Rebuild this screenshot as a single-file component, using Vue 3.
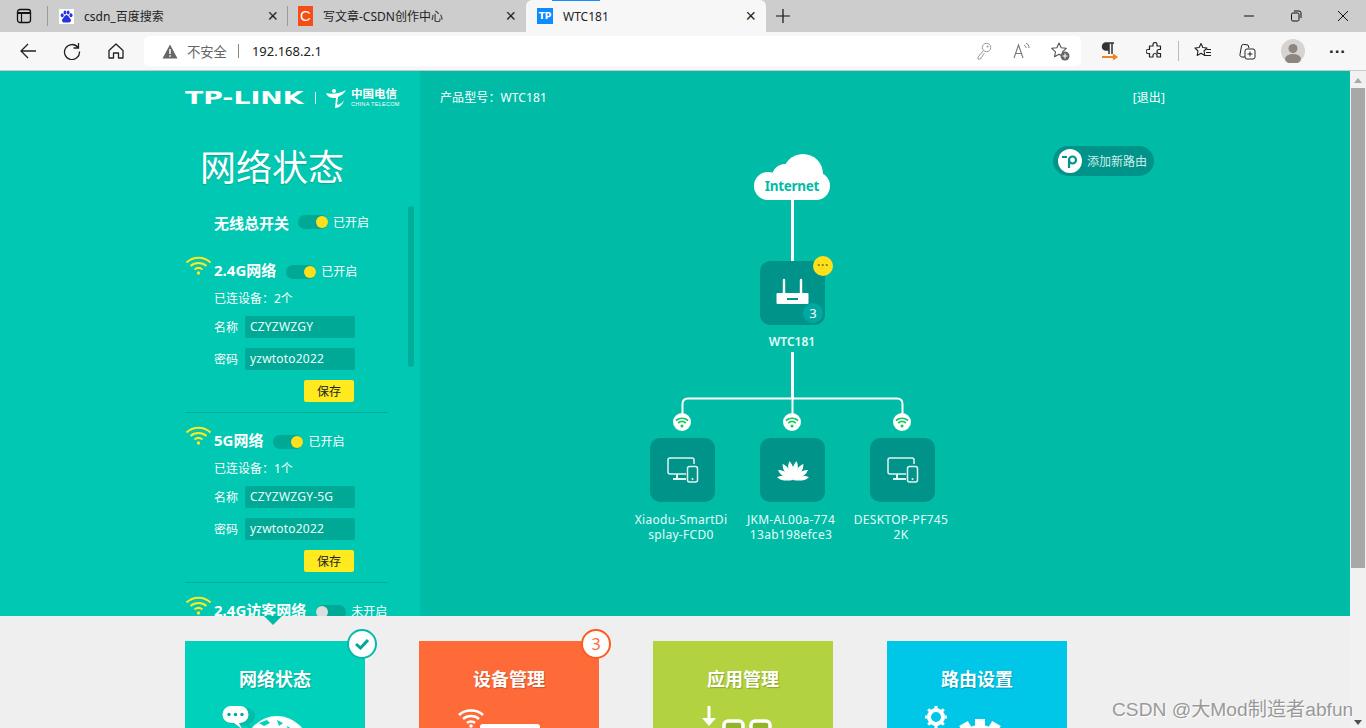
<script setup>
const nets = [
  { id: 1, title: '2.4G网络', on: true, open: true, info: '已连设备：2个', ssid: 'CZYZWZGY', pwd: 'yzwtoto2022' },
  { id: 2, title: '5G网络', on: true, open: true, info: '已连设备：1个', ssid: 'CZYZWZGY-5G', pwd: 'yzwtoto2022' },
  { id: 3, title: '2.4G访客网络', on: false, open: false }
]

const devices = [
  { id: 1, x: 682, l1: 'Xiaodu-SmartDi', l2: 'splay-FCD0', icon: 'screen' },
  { id: 2, x: 792, l1: 'JKM-AL00a-774', l2: '13ab198efce3', icon: 'huawei' },
  { id: 3, x: 902, l1: 'DESKTOP-PF745', l2: '2K', icon: 'screen' }
]

const cards = [
  { id: 1, name: '网络状态', cls: 'green' },
  { id: 2, name: '设备管理', cls: 'orange' },
  { id: 3, name: '应用管理', cls: 'lime' },
  { id: 4, name: '路由设置', cls: 'blue' }
]

const petals = [
  { a: -80, s: 0.85 },
  { a: -56, s: 0.95 },
  { a: -33, s: 1 },
  { a: -11, s: 1 },
  { a: 11, s: 1 },
  { a: 33, s: 1 },
  { a: 56, s: 0.95 },
  { a: 80, s: 0.85 }
]
const teeth = [0, 45, 90, 135, 180, 225, 270, 315]
const bigTeeth = [-60, -30, 0, 30, 60]

const petalTransform = (p) => `rotate(${p.a} 17 21) translate(17 21) scale(${p.s}) translate(-17 -21)`
</script>

<template>
  <div class="browser">
    <div class="tabbar">
      <svg class="tabside" width="16" height="16" viewBox="0 0 16 16">
        <rect x="1.5" y="1.5" width="13" height="13" rx="2.5" fill="none" stroke="#111" stroke-width="1.3" />
        <path d="M2 5h12" stroke="#111" stroke-width="2" />
        <path d="M5.5 5v9" stroke="#111" stroke-width="1.2" />
      </svg>
      <div class="tab tab-one">
        <svg class="fav" width="15" height="15" viewBox="0 0 15 15">
          <rect width="15" height="15" fill="#fff" />
          <ellipse cx="3.2" cy="6.2" rx="1.5" ry="2" fill="#2932e1" />
          <ellipse cx="6" cy="3.4" rx="1.4" ry="2" fill="#2932e1" />
          <ellipse cx="9.2" cy="3.4" rx="1.4" ry="2" fill="#2932e1" />
          <ellipse cx="12" cy="6.2" rx="1.5" ry="2" fill="#2932e1" />
          <path d="M7.5 6C5.5 6 5 8.5 3.5 10c-1.2 1.5 0 3.8 2 3.6 1.2-.2 2.6-.2 4 0 2 .2 3.2-2 2-3.6C10 8.500 9.500 6 7.500 6z" fill="#2932e1" />
        </svg>
        <span class="tabtext">csdn_百度搜索</span>
        <span class="tabx">×</span>
      </div>
      <div class="tab tab-two">
        <span class="fav-c">C</span>
        <span class="tabtext">写文章-CSDN创作中心</span>
        <span class="tabx">×</span>
      </div>
      <div class="tab tab-active">
        <span class="fav-tp">TP</span>
        <span class="tabtext">WTC181</span>
        <span class="tabx">×</span>
      </div>
      <svg class="plus" width="14" height="14" viewBox="0 0 14 14"><path d="M7 0v14M0 7h14" stroke="#111" stroke-width="1.2" /></svg>
      <div class="winctl">
        <svg width="12" height="12" viewBox="0 0 12 12"><path d="M1 6h10" stroke="#111" stroke-width="1" /></svg>
        <svg width="12" height="12" viewBox="0 0 12 12"><rect x="1.500" y="3" width="7.500" height="8" rx="1.500" fill="none" stroke="#111" /><path d="M4 1h5a2 2 0 0 1 2 2v5" fill="none" stroke="#111" /></svg>
        <svg width="12" height="12" viewBox="0 0 12 12"><path d="M1 1l10 10M11 1L1 11" stroke="#111" stroke-width="1" /></svg>
      </div>
    </div>

    <div class="toolbar">
      <svg class="tool first" width="18" height="18" viewBox="0 0 18 18"><path d="M17 9H2M9 2L2 9l7 7" fill="none" stroke="#222" stroke-width="1.300" /></svg>
      <svg class="tool" width="18" height="18" viewBox="0 0 18 18"><path d="M15 5.500A7.500 7.500 0 1 0 16.500 9.500M15.500 1v5h-5" fill="none" stroke="#222" stroke-width="1.300" /></svg>
      <svg class="tool" width="18" height="18" viewBox="0 0 18 18"><path d="M2 8.500L9 2l7 6.500V16h-4.500v-5h-5v5H2z" fill="none" stroke="#222" stroke-width="1.300" stroke-linejoin="round" /></svg>
      <div class="address">
        <svg width="16" height="15" viewBox="0 0 16 15"><path d="M8 0.500L15.500 14.500H0.500z" fill="#666" /><path d="M8 5v5M8 11.200v1.600" stroke="#fff" stroke-width="1.500" /></svg>
        <span class="unsafe">不安全</span>
        <i class="addr-sep"></i>
        <span class="url">192.168.2.1</span>
        <div class="addr-right">
          <svg width="16" height="18" viewBox="0 0 16 18"><circle cx="10.500" cy="5.500" r="4.200" fill="none" stroke="#999" /><path d="M7.500 8.500L2 15v2h2.500l1-2 1-.5.500-2 1.500-1" fill="none" stroke="#999" /><circle cx="11.500" cy="4.500" r="1" fill="#999" /></svg>
          <svg width="18" height="18" viewBox="0 0 18 18"><path d="M2 16L6.500 3 11 16M3.500 11.500h6" fill="none" stroke="#777" stroke-width="1.100" /><path d="M12 3c1.500.8 2 2 2 3M14 1c2 1 3 3 3 5" fill="none" stroke="#777" /></svg>
          <svg width="20" height="20" viewBox="0 0 20 20"><path d="M9 2l2.200 4.700 5.100.6-3.800 3.500 1 5-4.500-2.600-4.500 2.600 1-5L1.700 7.300l5.100-.6z" fill="#fff" stroke="#555" stroke-width="1.100" stroke-linejoin="round" /><circle cx="15" cy="15" r="4.500" fill="#666" /><path d="M15 12.500v5M12.500 15h5" stroke="#fff" stroke-width="1.100" /></svg>
        </div>
      </div>
      <svg class="ext" width="18" height="20" viewBox="0 0 18 20"><path d="M8 2H5a3.500 3.500 0 0 0 0 7h3zM8 2h5M8 2v11M11 2v11" fill="#333" stroke="#333" stroke-width="1.500" /><path d="M1 16h14M12 13.500l3.500 2.500-3.500 2.500" fill="none" stroke="#f58220" stroke-width="1.800" /></svg>
      <svg class="ext puzzle" width="18" height="18" viewBox="0 0 18 18"><path d="M7 2.500a2 2 0 0 1 4 0V4h3.500v3.500H13a2 2 0 0 0 0 4h1.500V15H11v-1.500a2 2 0 0 0-4 0V15H3.500v-3.500H2a2 2 0 0 1 0-4h1.500V4H7z" fill="none" stroke="#222" stroke-width="1.200" stroke-linejoin="round" /></svg>
      <i class="tool-sep"></i>
      <svg class="ext fav-list" width="18" height="18" viewBox="0 0 18 18"><path d="M7 1.500l1.800 4 4.200.5-3 3 .8 4.500L7 11.300 3.200 13.500 4 9 1 6l4.200-.5z" fill="none" stroke="#222" stroke-width="1.100" stroke-linejoin="round" /><path d="M12.500 7.500H17M12 10.500h5M11 13.500h6" stroke="#222" /></svg>
      <svg class="ext coll" width="18" height="18" viewBox="0 0 18 18"><path d="M7 15H4a2 2 0 0 1-2-2.500L3.500 4a2 2 0 0 1 2.200-1.600L10 3l1 3" fill="none" stroke="#222" /><rect x="7" y="7" width="10" height="10" rx="2" fill="#fff" stroke="#222" /><path d="M12 9.500v5M9.500 12h5" stroke="#222" /></svg>
      <svg class="ext avatar" width="24" height="24" viewBox="0 0 24 24"><circle cx="12" cy="12" r="12" fill="#d6d3d0" /><circle cx="12" cy="9.500" r="4.500" fill="#8b8682" /><ellipse cx="12" cy="20" rx="8" ry="5" fill="#8b8682" /></svg>
      <span class="more">···</span>
    </div>

    <div class="page">
      <div class="content">
        <div class="top">
          <aside class="side">
            <div class="logos">
              <span class="tplink">TP-LINK</span>
              <i class="logo-sep"></i>
              <svg width="22" height="20" viewBox="0 0 22 20"><path d="M1 5c5 2 15 0 20-3-2 4-6 6-8 7l-1 8c4-1 6-3 7-5-1 4-4 8-9 8l1-10C7 10 3 10 1 5z" fill="#fff" /><circle cx="9" cy="3" r="2" fill="#fff" /></svg>
              <div class="ct">
                <span class="ct-cn">中国电信</span>
                <span class="ct-en">CHINA TELECOM</span>
              </div>
            </div>
            <h1 class="title">网络状态</h1>
            <div class="master">
              <b>无线总开关</b>
              <span class="toggle on"><i></i></span>
              <span class="state">已开启</span>
            </div>
            <i class="side-scroll"></i>
            <section v-for="n in nets" :key="n.id" class="net" :class="{ first: n.id === 1 }">
              <div class="net-head">
                <svg width="27" height="20" viewBox="0 0 27 20" class="wifi">
                  <path d="M1.500 7.500C8 1 19 1 25.500 7.500M5.500 11c4.500-4 11.500-4 16 0M9.500 14.500c2.500-2 5.500-2 8 0" fill="none" stroke="#ffe91f" stroke-width="2" />
                  <circle cx="13.500" cy="18" r="1.700" fill="#ffe91f" />
                </svg>
                <b class="net-name">{{ n.title }}</b>
                <span class="toggle" :class="n.on ? 'on' : 'off'"><i></i></span>
                <span class="state">{{ n.on ? '已开启' : '未开启' }}</span>
              </div>
              <template v-if="n.open">
                <div class="net-info">{{ n.info }}</div>
                <div class="field"><label>名称</label><span class="input">{{ n.ssid }}</span></div>
                <div class="field"><label>密码</label><span class="input">{{ n.pwd }}</span></div>
                <div class="save-row"><button class="save">保存</button></div>
              </template>
            </section>
          </aside>

          <main class="main">
            <div class="main-head">
              <span>产品型号：WTC181</span>
              <a>[退出]</a>
            </div>
            <div class="add-route">
              <span class="add-dot">
                <svg width="18" height="14" viewBox="0 0 18 14"><path d="M1 3h5" stroke="#00938a" stroke-width="2" /><circle cx="11.500" cy="6" r="3.500" fill="none" stroke="#00938a" stroke-width="2.200" /><path d="M8 6v8" stroke="#00938a" stroke-width="2.200" /></svg>
              </span>
              <span>添加新路由</span>
            </div>

            <!-- topology canvas, coordinates are page x minus 420 and page y minus 71 -->
            <svg class="links" width="930" height="545" viewBox="420 71 930 545">
              <path d="M792.500 198V262M792.500 352V398" stroke="#fff" stroke-width="3" fill="none" />
              <path d="M682.500 414V404q0-5.500 5.500-5.500H897q5.500 0 5.500 5.500V414M792.500 398V414" stroke="#fff" stroke-width="2" fill="none" />
              <g fill="#fff">
                <circle cx="768" cy="186" r="14" />
                <circle cx="785" cy="177" r="13" />
                <circle cx="803" cy="174" r="20" />
                <circle cx="816" cy="186" r="14" />
                <rect x="768" y="180" width="48" height="20" />
              </g>
            </svg>
            <span class="internet">Internet</span>

            <div class="tile router">
              <svg width="34" height="30" viewBox="0 0 34 30">
                <path d="M8 16V2M25 16V2" stroke="#fff" stroke-width="2.400" stroke-linecap="round" />
                <rect x="0.500" y="15" width="32" height="11" rx="1" fill="#fff" />
                <rect x="11" y="20" width="11" height="2" fill="#00938a" />
              </svg>
              <span class="more-badge">···</span>
              <span class="count">3</span>
            </div>
            <span class="router-name">WTC181</span>

            <template v-for="d in devices" :key="d.id">
              <span class="link-dot" :style="{ left: d.x - 429 + 'px' }">
                <svg width="14" height="11" viewBox="0 0 14 11"><path d="M1 3.500c3.500-3 8.500-3 12 0M3.200 6c2.300-2 5.300-2 7.600 0" fill="none" stroke="#12c95d" stroke-width="1.700" /><circle cx="7" cy="9" r="1.500" fill="#12c95d" /></svg>
              </span>
              <div class="tile device" :style="{ left: d.x - 452 + 'px' }">
                <svg v-if="d.icon === 'screen'" width="32" height="26" viewBox="0 0 32 26">
                  <path d="M19 17H3a2 2 0 0 1-2-2V3a2 2 0 0 1 2-2h22a2 2 0 0 1 2 2v4" fill="none" stroke="#dff5f2" stroke-width="1.500" />
                  <path d="M10 17v5M6 22h13" stroke="#dff5f2" stroke-width="2" />
                  <rect x="20.500" y="9.500" width="10" height="15.500" rx="2" fill="none" stroke="#dff5f2" stroke-width="1.500" />
                  <circle cx="25.500" cy="22" r="1" fill="#dff5f2" />
                </svg>
                <svg v-else width="34" height="23" viewBox="0 0 34 23">
                  <path v-for="p in petals" :key="p.a" d="M17 21C15.500 17 14.300 12 14.600 8 15 5.500 16 3.500 17 2 18 3.500 19 5.500 19.400 8 19.700 12 18.500 17 17 21z" fill="#fff" :transform="petalTransform(p)" />
                </svg>
              </div>
              <div class="device-name" :style="{ left: d.x - 481 + 'px' }">{{ d.l1 }}<br />{{ d.l2 }}</div>
            </template>
          </main>
        </div>

        <div class="bottom">
          <i class="caret"></i>
          <div v-for="c in cards" :key="c.id" class="card" :class="c.cls">
            <span v-if="c.id === 1" class="badge check">
              <svg width="16" height="12" viewBox="0 0 16 12"><path d="M2 6l4.500 4L14 2" fill="none" stroke="#00a896" stroke-width="3" /></svg>
            </span>
            <span v-if="c.id === 2" class="badge num">3</span>
            <h3>{{ c.name }}</h3>
            <svg class="card-art" width="180" height="32" viewBox="0 0 180 32">
              <g v-if="c.id === 1">
                <path d="M48 2h13a8 8 0 0 1 2 16l4 5-6-3-13-2a8 8 0 0 1 0-16z" fill="#00a896" opacity="0.500" />
                <path d="M46 0h9a8.500 8.500 0 0 1 0 17h-1l3 6-8-6h-3a8.500 8.500 0 0 1 0-17z" fill="#fff" />
                <circle cx="44" cy="8.500" r="1.700" fill="#00a896" /><circle cx="50.500" cy="8.500" r="1.700" fill="#00a896" /><circle cx="57" cy="8.500" r="1.700" fill="#00a896" />
                <circle cx="92" cy="42" r="32" fill="#fff" />
                <path d="M74 17l8-3 3 3-6 3zM92 14l6 3-4 3zM102 20l5 3-4 2z" fill="#00d1bb" />
              </g>
              <g v-if="c.id === 2">
                <path d="M40 9c6-6 18-6 24 0M44 13c4-4 12-4 16 0M48 17c2-2 6-2 8 0" fill="none" stroke="#fff" stroke-width="2.500" />
                <circle cx="52" cy="20" r="1.800" fill="#fff" />
                <rect x="61" y="18" width="60" height="40" rx="3" fill="#fff" />
              </g>
              <g v-if="c.id === 3">
                <path d="M56 0V14" stroke="#fff" stroke-width="3" /><path d="M49 12h14l-7 8z" fill="#fff" />
                <rect x="71" y="15" width="19" height="24" rx="4" fill="#8fb62b" stroke="#fff" stroke-width="3.500" />
                <rect x="98" y="15" width="19" height="24" rx="4" fill="#8fb62b" stroke="#fff" stroke-width="3.500" />
              </g>
              <g v-if="c.id === 4">
                <circle cx="49" cy="11" r="7" fill="none" stroke="#fff" stroke-width="4" />
                <path v-for="t in teeth" :key="t" d="M47.500 0h3v3.500h-3z" fill="#fff" :transform="'rotate(' + t + ' 49 11)'" />
                <circle cx="93" cy="46" r="27" fill="#fff" />
                <path v-for="t in bigTeeth" :key="'b' + t" d="M88 13h10v10H88z" fill="#fff" :transform="'rotate(' + t + ' 93 46)'" />
              </g>
            </svg>
          </div>
          <span class="watermark">CSDN @大Mod制造者abfun</span>
        </div>
      </div>

      <div class="scrollbar">
        <i class="arrow up"></i>
        <i class="thumb"></i>
        <i class="arrow down"></i>
      </div>
    </div>
  </div>
</template>

<style scoped>
.browser {
  width: 1366px;
  height: 728px;
  overflow: hidden;
  display: flex;
  flex-direction: column;
  font-family: "Noto Sans", "Noto Sans CJK SC", sans-serif;
  color: #fff;
}

/* tabs */
.tabbar {
  height: 32px;
  background: #cdcdcd;
  display: flex;
  align-items: center;
  color: #222;
  font-size: 12px;
  flex: none;
}
.tabside {
  margin-left: 16px;
}
.tab {
  height: 32px;
  display: flex;
  align-items: center;
  position: relative;
  flex: none;
}
.tab-one {
  margin-left: 15px;
  width: 240px;
  padding-left: 11px;
  border-left: 1px solid #9a9a9a;
  height: 20px;
  box-sizing: border-box;
}
.tab-two {
  width: 239px;
  padding-left: 10px;
  border-left: 1px solid #9a9a9a;
  height: 20px;
  box-sizing: border-box;
}
.tab-active {
  width: 240px;
  padding-left: 11px;
  box-sizing: border-box;
  background: #f7f7f7;
  border-radius: 6px 6px 0 0;
}
.tab-active::before {
  content: "";
  position: absolute;
  top: 0;
  left: 26px;
  width: 48px;
  height: 1px;
  background: #1a8cff;
}
.fav {
  flex: none;
}
.fav-c {
  width: 15px;
  height: 20px;
  flex: none;
  background: #f64c15;
  color: #fff;
  font: 400 15px/20px "Liberation Sans", sans-serif;
  text-align: center;
}
.fav-tp {
  width: 16px;
  height: 16px;
  flex: none;
  background: #0d8bff;
  color: #fff;
  font: 700 9px/16px "DejaVu Sans", sans-serif;
  text-align: center;
}
.tabtext {
  margin-left: 10px;
}
.tabx {
  position: absolute;
  right: 10px;
  top: 50%;
  transform: translateY(-50%);
  font: 400 18px/18px "Liberation Sans", sans-serif;
  color: #222;
}
.tab-one .tabx {
  right: 9px;
}
.plus {
  margin-left: 10px;
}
.winctl {
  margin-left: auto;
  display: flex;
  gap: 35px;
  padding-right: 17px;
}

/* toolbar */
.toolbar {
  height: 39px;
  box-sizing: border-box;
  background: #f7f7f7;
  border-bottom: 1px solid #c9c9c9;
  display: flex;
  align-items: center;
  flex: none;
}
.tool {
  margin-left: 26px;
}
.tool.first {
  margin-left: 19px;
}
.address {
  margin-left: 19px;
  width: 937px;
  height: 30px;
  background: #fff;
  border-radius: 5px;
  display: flex;
  align-items: center;
  box-sizing: border-box;
  padding: 0 11px 0 18px;
  font-size: 13px;
}
.unsafe {
  margin-left: 9px;
  font-size: 13.300px;
  color: #666;
}
.addr-sep {
  width: 1px;
  height: 14px;
  background: #888;
  margin: 0 13px 0 11px;
}
.url {
  color: #222;
  font-size: 13px;
}
.addr-right {
  margin-left: auto;
  display: flex;
  align-items: center;
  gap: 20px;
}
.ext {
  margin-left: 20px;
  flex: none;
}
.puzzle {
  margin-left: 27px;
}
.tool-sep {
  width: 1px;
  height: 20px;
  background: #bbb;
  margin-left: 14px;
}
.fav-list {
  margin-left: 15px;
}
.coll {
  margin-left: 26px;
}
.avatar {
  margin-left: 25px;
}
.more {
  margin-left: 24px;
  color: #222;
  font: 700 17px/1 "Liberation Sans", sans-serif;
}

/* page */
.page {
  flex: 1;
  display: flex;
  min-height: 0;
}
.content {
  width: 1350px;
  display: flex;
  flex-direction: column;
}
.top {
  height: 545px;
  display: flex;
  flex: none;
  overflow: hidden;
}
.side {
  width: 420px;
  flex: none;
  box-sizing: border-box;
  background: #00c8b2;
  padding-left: 185px;
  position: relative;
}
.logos {
  height: 24px;
  margin-top: 15px;
  display: flex;
  align-items: center;
}
.tplink {
  font: 700 17px/20px "DejaVu Sans", sans-serif;
  width: 118px;
  display: inline-block;
  white-space: nowrap;
  transform: scaleX(1.570);
  transform-origin: left center;
}
.logo-sep {
  width: 1px;
  height: 12px;
  background: #e8fbf8;
  margin: 0 9px 0 12px;
}
.ct {
  margin-left: 4px;
  display: flex;
  flex-direction: column;
  line-height: 1;
}
.ct-cn {
  font-size: 11.500px;
  font-weight: 700;
}
.ct-en {
  font: 400 5.500px/7px "Liberation Sans", sans-serif;
  letter-spacing: 0.300px;
  margin-top: 2px;
}
.title {
  margin: 33px 0 0 15px;
  font-size: 36px;
  line-height: 50px;
  font-weight: 400;
  text-shadow: 0 1px 1px rgba(0, 120, 105, 0.4);
}
.master {
  margin: 18px 0 0 29px;
  height: 22px;
  display: flex;
  align-items: center;
}
.master b {
  font-size: 15px;
  width: 84px;
  flex: none;
  white-space: nowrap;
}
.toggle {
  width: 30px;
  height: 14px;
  border-radius: 7px;
  background: #00a896;
  position: relative;
  flex: none;
}
.toggle i {
  position: absolute;
  top: 1px;
  width: 12px;
  height: 12px;
  border-radius: 50%;
}
.toggle.on i {
  right: 0;
  background: #ffe01a;
}
.toggle.off i {
  left: 0;
  background: #ddd;
}
.state {
  margin-left: 5px;
  font-size: 12px;
  white-space: nowrap;
}
.side-scroll {
  position: absolute;
  left: 408px;
  top: 135px;
  width: 6px;
  height: 161px;
  border-radius: 3px;
  background: #00ad9a;
}
.net {
  width: 203px;
  height: 170px;
  box-sizing: border-box;
  padding-top: 12px;
  border-bottom: 1px solid #00ad9a;
}
.net.first {
  margin-top: 22px;
  height: 158px;
  padding-top: 0;
}
.net-head {
  display: flex;
  align-items: flex-start;
  height: 24px;
  white-space: nowrap;
}
.wifi {
  flex: none;
  margin-right: 2px;
}
.net-name {
  font-size: 15px;
  line-height: 20px;
  margin: 5px 10px 0 0;
}
.net-head .toggle {
  margin-top: 10px;
}
.net-head .state {
  line-height: 20px;
  margin-top: 7px;
}
.net-info {
  margin: 9px 0 0 29px;
  font-size: 12px;
  line-height: 22px;
}
.field {
  margin: 6px 0 0 29px;
  display: flex;
  align-items: center;
  height: 22px;
  font-size: 12px;
}
.field + .field {
  margin-top: 10px;
}
.field label {
  width: 31px;
  flex: none;
}
.input {
  width: 110px;
  height: 22px;
  box-sizing: border-box;
  padding-left: 5px;
  background: #00a896;
  border-radius: 2px;
  line-height: 22px;
  color: #eafffb;
  letter-spacing: 0.200px;
}
.save-row {
  margin: 10px 0 0 119px;
}
.save {
  width: 50px;
  height: 22px;
  display: block;
  border: none;
  padding: 0;
  border-radius: 2px;
  background: #ffe91f;
  color: #222;
  font: 400 12px/22px "Noto Sans CJK SC", sans-serif;
}

.main {
  flex: 1;
  background: #00bca7;
  position: relative;
  font-size: 12px;
}
.main-head {
  height: 52px;
  padding: 0 185px 0 20px;
  display: flex;
  justify-content: space-between;
  align-items: center;
  letter-spacing: 0.100px;
}
.add-route {
  position: absolute;
  left: 633px;
  top: 75px;
  width: 101px;
  height: 30px;
  box-sizing: border-box;
  padding-left: 5px;
  border-radius: 15px;
  background: #00938a;
  color: #cdeee9;
  display: flex;
  align-items: center;
  gap: 5px;
}
.add-dot {
  width: 24px;
  height: 24px;
  border-radius: 50%;
  background: #fff;
  display: flex;
  align-items: center;
  justify-content: center;
}
.links {
  position: absolute;
  left: 0;
  top: 0;
}
.internet {
  position: absolute;
  left: 334px;
  top: 105px;
  width: 76px;
  text-align: center;
  color: #00bca7;
  font-size: 13.500px;
  letter-spacing: -0.300px;
  line-height: 20px;
  font-weight: 700;
}
.tile {
  position: absolute;
  width: 65px;
  height: 64px;
  border-radius: 10px;
  background: #00938a;
  display: flex;
  align-items: center;
  justify-content: center;
}
.router {
  left: 340px;
  top: 190px;
}
.more-badge {
  position: absolute;
  right: -8px;
  top: -5px;
  width: 20px;
  height: 20px;
  border-radius: 50%;
  background: #ffe01a;
  color: #8a7a10;
  font: 700 12px/18px "Liberation Sans", sans-serif;
  text-align: center;
}
.count {
  position: absolute;
  right: 2px;
  bottom: 2px;
  width: 20px;
  height: 20px;
  border-radius: 50%;
  background: #00a8a0;
  font-size: 13px;
  line-height: 20px;
  text-align: center;
}
.router-name {
  position: absolute;
  left: 322px;
  top: 262px;
  width: 100px;
  text-align: center;
  line-height: 18px;
  font-weight: 600;
  color: #e6fbf8;
}
.link-dot {
  position: absolute;
  top: 342px;
  width: 18px;
  height: 18px;
  border-radius: 50%;
  background: #fff;
  display: flex;
  align-items: center;
  justify-content: center;
}
.device {
  top: 367px;
}
.device-name {
  position: absolute;
  top: 441px;
  width: 120px;
  text-align: center;
  line-height: 15px;
  color: #e6fbf8;
  white-space: nowrap;
  letter-spacing: 0.300px;
}

/* bottom cards */
.bottom {
  flex: 1;
  min-height: 0;
  background: #efefef;
  padding: 25px 0 0 185px;
  display: flex;
  gap: 54px;
  position: relative;
  z-index: 1;
}
.caret {
  position: absolute;
  left: 264px;
  top: 0;
  border: 9px solid transparent;
  border-bottom: none;
  border-top-color: #00bca7;
}
.card {
  width: 180px;
  height: 87px;
  flex: none;
  position: relative;
  text-align: center;
}
.card h3 {
  margin: 27px 0 0;
  font-size: 18px;
  line-height: 22px;
  font-weight: 700;
  text-shadow: 1px 1px 1px rgba(0, 0, 0, 0.2);
}
.card-art {
  display: block;
  margin-top: 16px;
}
.green {
  background: #00d1bb;
}
.orange {
  background: #ff6a39;
}
.lime {
  background: #b2d23f;
}
.blue {
  background: #00c7e8;
}
.badge {
  position: absolute;
  right: -12px;
  top: -12px;
  width: 30px;
  height: 30px;
  box-sizing: border-box;
  border-radius: 50%;
  background: #fff;
  display: flex;
  align-items: center;
  justify-content: center;
}
.check {
  border: 2px solid #00bca7;
}
.num {
  border: 2px solid #ff5a1f;
  color: #ff6a39;
  font-size: 16px;
}
.watermark {
  position: absolute;
  left: 1112px;
  top: 81px;
  font: 400 19.200px/26px "Liberation Sans", "Noto Sans CJK SC", sans-serif;
  color: #999;
  text-shadow: 1px 1px 1px #fff;
  white-space: nowrap;
}

.scrollbar {
  width: 16px;
  background: #f1f1f1;
  position: relative;
  display: flex;
  flex-direction: column;
  align-items: center;
}
.thumb {
  width: 14px;
  height: 480px;
  background: #a8a8a8;
  margin-top: 5px;
}
.arrow {
  width: 0;
  height: 0;
  border-left: 4px solid transparent;
  border-right: 4px solid transparent;
}
.arrow.up {
  margin-top: 7px;
  border-bottom: 5px solid #a8a8a8;
}
.arrow.down {
  margin-top: auto;
  margin-bottom: 3px;
  border-top: 5px solid #505050;
}
</style>
